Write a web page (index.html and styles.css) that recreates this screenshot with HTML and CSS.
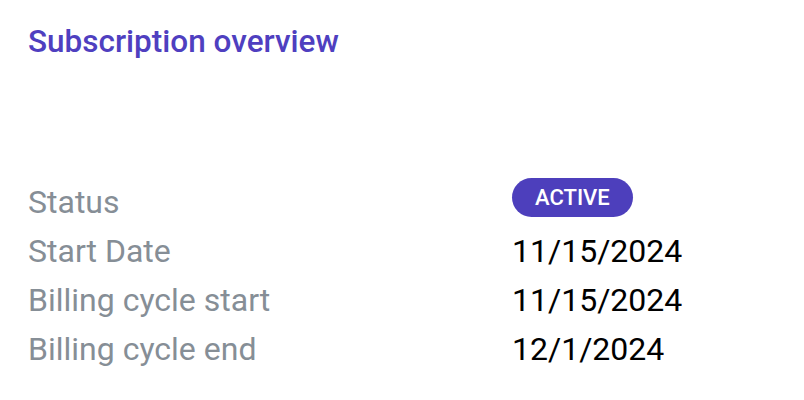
FILE: index.html
```html
<!DOCTYPE html>
<html>
<head>
    <title>Subscription overview</title>
    <meta charset="UTF-8">
    <link rel="stylesheet" href="styles.css">
</head>
<body>
    <div class="card">
        <h2 class="title">Subscription overview</h2>

        <div class="details">
            <div class="label">Status</div>
            <div class="value"><span class="badge">ACTIVE</span></div>

            <div class="label">Start Date</div>
            <div class="value">11/15/2024</div>

            <div class="label">Billing cycle start</div>
            <div class="value">11/15/2024</div>

            <div class="label">Billing cycle end</div>
            <div class="value">12/1/2024</div>
        </div>
    </div>
</body>
</html>
```

FILE: styles.css
```css
body {
    margin: 0;
    font-family: Roboto, "Liberation Sans", sans-serif;
    background-color: #ffffff;
}
.card {
    padding: 24px 28px;
}
.title {
    margin: 0;
    font-size: 31.5px;
    font-weight: 500;
    color: #4f3fc0;
    line-height: 36px;
}
.details {
    display: grid;
    grid-template-columns: 484px auto;
    margin-top: 118px;
    align-items: start;
}
.label {
    font-size: 32px;
    color: #868e96;
    line-height: 49px;
}
.value {
    font-size: 32px;
    color: #000000;
    line-height: 49px;
}
.badge {
    display: inline-block;
    background-color: #4d3fbc;
    color: #ffffff;
    font-size: 22px;
    font-weight: 500;
    line-height: 39px;
    padding: 0 23px;
    border-radius: 20px;
    vertical-align: top;
}
```
